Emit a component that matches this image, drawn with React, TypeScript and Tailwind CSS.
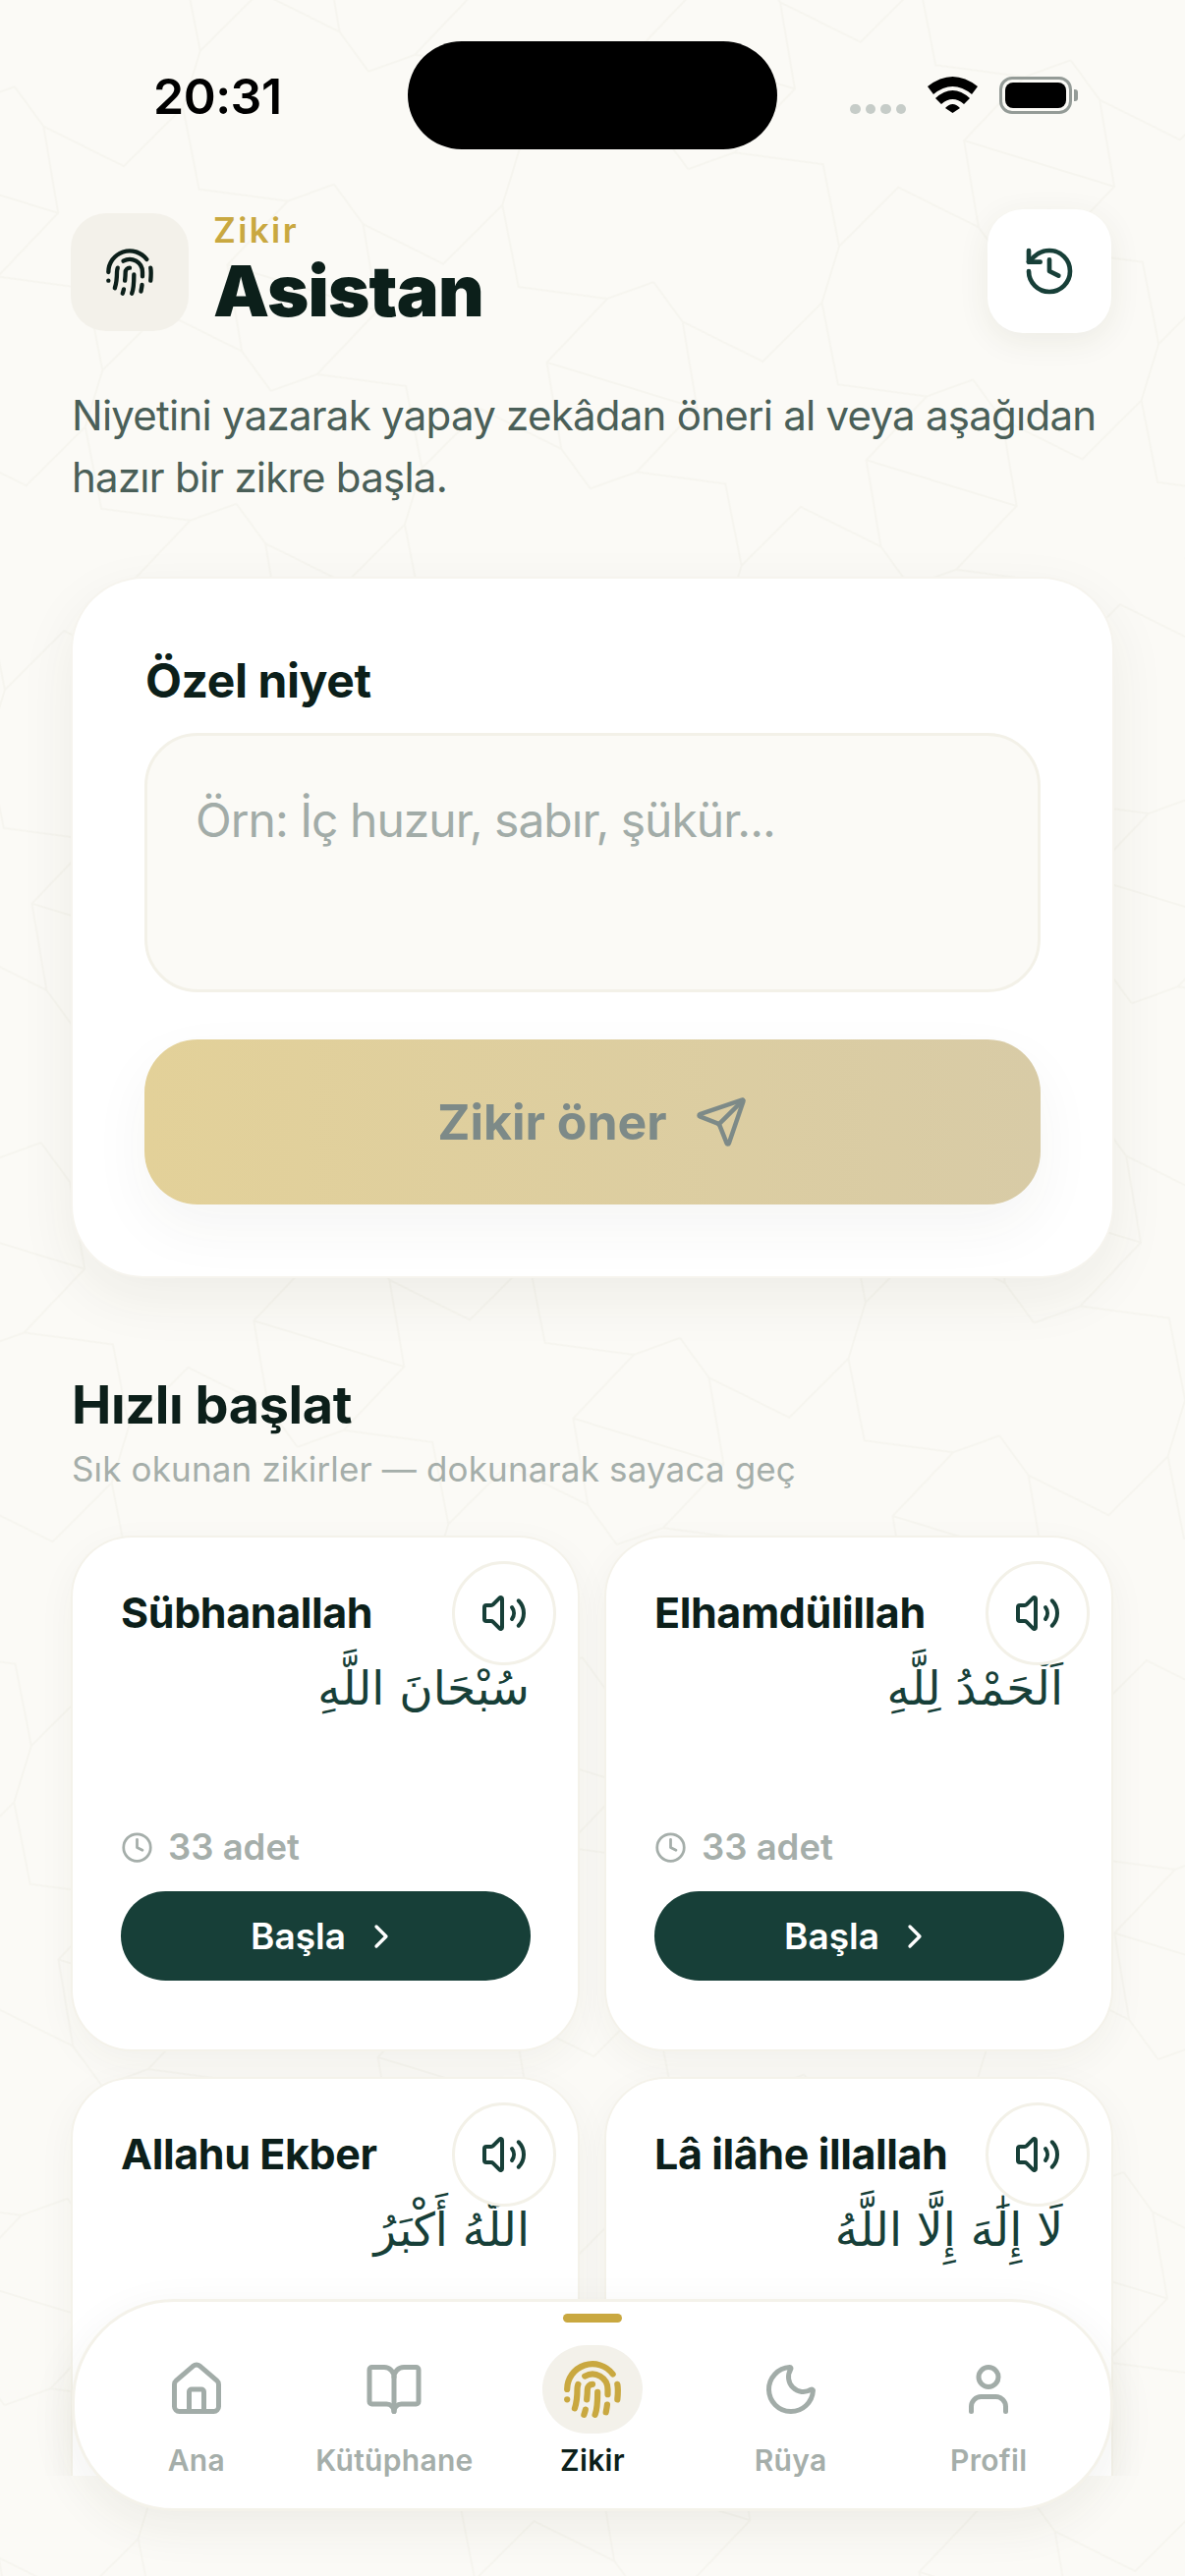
import React from 'react'
import { BookOpen, ChevronRight, Clock, Fingerprint, History, House, Moon, Send, User, Volume2 } from 'lucide-react'

interface Zikir {
  name: string
  arabic: string
}

const zikirs: Zikir[] = [
  { name: 'Sübhanallah', arabic: 'سُبْحَانَ اللَّهِ' },
  { name: 'Elhamdülillah', arabic: 'اَلْحَمْدُ لِلَّهِ' },
  { name: 'Allahu Ekber', arabic: 'اللّٰهُ أَكْبَرُ' },
  { name: 'Lâ ilâhe illallah', arabic: 'لَا إِلَٰهَ إِلَّا اللَّهُ' },
]

const tabs = [
  { label: 'Ana', icon: House },
  { label: 'Kütüphane', icon: BookOpen },
  { label: 'Zikir', icon: Fingerprint, active: true },
  { label: 'Rüya', icon: Moon },
  { label: 'Profil', icon: User },
]

function Pattern() {
  return (
    <svg className="absolute inset-0 h-full w-full" width="1206" height="2622">
      <defs>
        <pattern id="girih" width="340" height="340" patternUnits="userSpaceOnUse" patternTransform="rotate(17) translate(40 20)">
          <path
            d="M170 30 L210 105 L300 90 L260 170 L300 250 L210 235 L170 310 L130 235 L40 250 L80 170 L40 90 L130 105 Z M170 30 L170 -30 M80 170 L0 170 M260 170 L340 170 M170 310 L170 370 M40 90 L0 60 M300 90 L340 60 M40 250 L0 280 M300 250 L340 280"
            fill="none"
            stroke="#f6f5ef"
            strokeWidth="2"
          />
        </pattern>
      </defs>
      <rect width="1206" height="2622" fill="url(#girih)" />
    </svg>
  )
}

function StatusBar() {
  return (
    <div className="flex h-[152px] items-start pt-[42px]">
      <div className="w-[415px] pl-[156px] pt-[31px] text-[50px] leading-[50px] font-semibold tracking-[-0.5px] text-black">20:31</div>
      <div className="h-[110px] w-[376px] rounded-[55px] bg-black" />
      <div className="flex items-start pl-[74px] pt-[36px]">
        <div className="mt-[28px] flex gap-[5px]">
          <span className="h-[10px] w-[10.5px] rounded-full bg-[#c6ccc8]" />
          <span className="h-[10px] w-[10.5px] rounded-full bg-[#c6ccc8]" />
          <span className="h-[10px] w-[10.5px] rounded-full bg-[#c6ccc8]" />
          <span className="h-[10px] w-[10.5px] rounded-full bg-[#c6ccc8]" />
        </div>
        <svg className="ml-[22px]" width="51" height="37" viewBox="0 0 51 37">
          <path d="M0 10 Q25.5 -10 51 10 L45 18 Q25.5 2 6 18 Z M8 22 Q25.5 6 43 22 L37 28 Q25.5 18 14 28 Z M18 32 Q25.5 24 33 32 L25.5 37 Z" fill="#000" />
        </svg>
        <div className="ml-[22px] flex items-center">
          <div className="h-[38px] w-[74px] rounded-[13px] border-[3px] border-[#949b97] p-[3px]">
            <div className="h-full w-full rounded-[8px] bg-black" />
          </div>
          <div className="ml-[2px] h-[12px] w-[4px] rounded-r-[3px] bg-[#949b97]" />
        </div>
      </div>
    </div>
  )
}

function ZikirCard({ zikir }: { zikir: Zikir }) {
  return (
    <div className="relative flex h-[521px] flex-col rounded-[60px] bg-white px-[49px] pt-[48px] shadow-[0_0_0_2px_#f4f2ea,0_12px_40px_rgba(60,60,30,0.05)]">
      <div className="text-[43px] leading-[56px] font-bold tracking-[-0.4px] whitespace-nowrap text-[#0c1f1a]">{zikir.name}</div>
      <div dir="rtl" className="mt-[6px] h-[88px] font-['DejaVu_Sans',sans-serif] text-[47px] leading-[88px] text-[#173f38]">
        {zikir.arabic}
      </div>
      <div className="mt-[95px] flex items-center gap-[15px] text-[36.5px] leading-[44px] font-semibold text-[#a5aeaa]">
        <Clock size={33} strokeWidth={2} />
        33 adet
      </div>
      <button className="mt-[23px] flex h-[91px] w-[417px] items-center justify-center gap-[16px] rounded-[46px] bg-[#173f38] text-[37px] font-semibold text-white">
        Başla
        <ChevronRight size={40} strokeWidth={2} />
      </button>
      <div className="absolute top-[24px] right-[22px] flex h-[106px] w-[106px] items-center justify-center rounded-full border-[3px] border-[#f3f1e8] bg-white text-[#173f38]">
        <Volume2 size={48} strokeWidth={2} />
      </div>
    </div>
  )
}

export default function App() {
  return (
    <div className="relative h-[2622px] w-[1206px] overflow-hidden bg-[#fbfaf6] font-['Inter',sans-serif]">
      <Pattern />
      <div className="relative">
        <StatusBar />
        <div className="h-[2368px] overflow-hidden px-[74px]">
          <div className="mt-[61px] flex items-start justify-between">
            <div className="flex">
              <div className="-ml-[2px] mt-[4px] flex h-[120px] w-[120px] items-center justify-center rounded-[36px] bg-[#f3f1ea] text-[#0c1f1a]">
                <Fingerprint size={52} strokeWidth={2} />
              </div>
              <div className="ml-[25px]">
                <div className="text-[35px] leading-[42px] font-semibold tracking-[2.4px] text-[#c9a840]">Zikir</div>
                <div className="mt-[3px] text-[72px] leading-[76px] font-black tracking-[-0.8px] text-[#0c1f1a]">Asistan</div>
              </div>
            </div>
            <div className="-translate-x-[1px] flex h-[126px] w-[126px] items-center justify-center rounded-[36px] bg-white text-[#173f38] shadow-[0_8px_32px_rgba(60,60,30,0.08)]">
              <History size={56} strokeWidth={2} />
            </div>
          </div>
          <p className="-ml-[1px] mt-[52px] text-[42px] leading-[63px] tracking-[-0.75px] whitespace-nowrap text-[#4a5f58]">
            Niyetini yazarak yapay zekâdan öneri al veya aşağıdan
            <br />
            hazır bir zikre başla.
          </p>
          <div className="mt-[72px] h-[710px] rounded-[72px] bg-white px-[73px] pt-[74px] shadow-[0_0_0_2px_#f6f4ee,0_20px_60px_rgba(60,60,30,0.07)]">
            <div className="pl-[1px] text-[48px] leading-[60px] font-bold tracking-[-0.4px] text-[#0c1f1a]">Özel niyet</div>
            <div className="mt-[23px] h-[264px] rounded-[54px] border-[3px] border-[#f3f1e8] bg-[#fbfaf6] px-[49px] pt-[56px] text-[48px] leading-[60px] tracking-[-1px] whitespace-nowrap text-[#a2aca8]">
              Örn: İç huzur, sabır, şükür...
            </div>
            <button className="mt-[48px] flex h-[168px] w-full items-center justify-center gap-[28px] rounded-[54px] bg-gradient-to-r from-[#e3d199] to-[#d8cba6] text-[50px] font-bold text-[#7d8a88] shadow-[0_24px_60px_rgba(60,60,30,0.05)]">
              Zikir öner
              <Send size={54} strokeWidth={2} />
            </button>
          </div>
          <h2 className="-ml-[1px] mt-[97px] text-[54px] leading-[68px] font-bold tracking-[-0.4px] text-[#0c1f1a]">Hızlı başlat</h2>
          <p className="-ml-[1px] mt-[9px] text-[35px] leading-[44px] tracking-[0.15px] whitespace-nowrap text-[#a5aeaa]">Sık okunan zikirler — dokunarak sayaca geç</p>
          <div className="mt-[48px] grid grid-cols-2 gap-x-[29px] gap-y-[30px] pr-[1px]">
            {zikirs.map((z) => (
              <ZikirCard key={z.name} zikir={z} />
            ))}
          </div>
        </div>
      </div>
      <nav className="absolute top-[2340px] left-[73px] h-[216px] w-[1060px] rounded-[104px] border-[3px] border-[#f4f2ea] bg-white shadow-[0_16px_48px_rgba(60,60,30,0.07)]">
        <div className="absolute top-[12px] left-[497px] h-[9px] w-[60px] rounded-full bg-[#c9a840]" />
        <div className="grid grid-cols-5 px-[23px] pt-[44px]">
          {tabs.map((t) => (
            <div key={t.label} className="flex flex-col items-center">
              <div className={`flex h-[90px] w-[102px] items-center justify-center rounded-[45px] ${t.active ? 'bg-[#f3f1ea] text-[#c9a840]' : 'text-[#a2aca8]'}`}>
                <t.icon size={t.active ? 62 : 60} strokeWidth={t.active ? 2.4 : 2} />
              </div>
              <span className={`mt-[8px] text-[30px] leading-[38px] font-semibold tracking-[0.3px] whitespace-nowrap ${t.active ? 'text-[#0c1f1a]' : 'text-[#a5aeaa]'}`}>{t.label}</span>
            </div>
          ))}
        </div>
      </nav>
    </div>
  )
}
